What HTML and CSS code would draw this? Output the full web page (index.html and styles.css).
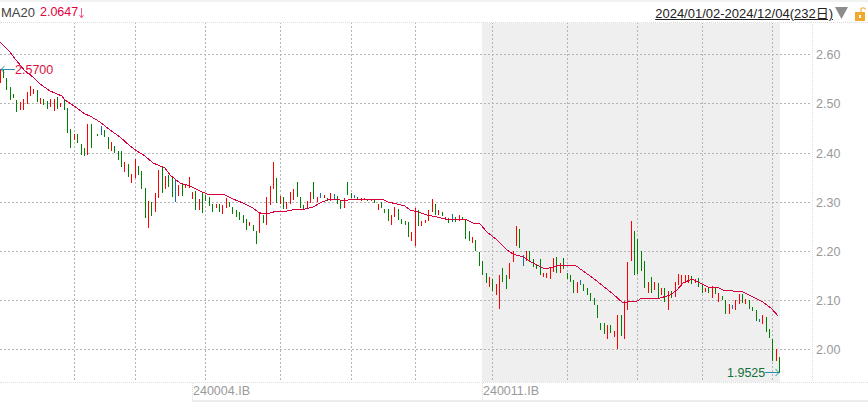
FILE: index.html
```html
<html>

<head>
	<title>MA20</title>
	<meta charset="utf-8">
	<link rel="stylesheet" href="styles.css">
</head>

<body>
	<div class="kline">
		<div class="head">
			<div class="legend">
				<span class="ma-name">MA20</span>
				<span class="ma-value">2.0647</span>
				<svg class="ma-arrow" width="5" height="11" viewBox="0 0 5 11">
					<path d="M2.500 0V10M.5 7L2.500 10L4.500 7" fill="none" stroke="#f0608c" stroke-width="1"/>
				</svg>
			</div>
			<div class="range">
				<span class="range-text">2024/01/02-2024/12/04(232日)</span>
				<svg class="range-caret" width="13" height="12" viewBox="0 0 13 12">
					<path d="M0 0H13L6.500 12Z" fill="#8c8c8c"/>
				</svg>
				<svg class="range-lock" width="11" height="14" viewBox="0 0 11 14">
					<path d="M6 5V3Q6 .8 8 .8T10.500 2.500" fill="none" stroke="#f0b040" stroke-width="1.200"/>
					<rect x="0" y="5" width="10" height="9" fill="#f0a92e"/>
					<rect x="4" y="8" width="2" height="3" fill="#fff"/>
				</svg>
			</div>
		</div>

		<svg class="plot" width="868" height="359" viewBox="0 23 868 359">
			<rect x="482" y="22" width="298" height="360" fill="#efefef"/>

			<!-- grid -->
			<path class="grid" d="M0 54.500H812M0 103.500H812M0 153.500H812M0 202.500H812M0 251.500H812M0 300.500H812M0 349.500H812"/>
			<path class="grid" d="M74.500 22V382M135.500 22V382M205.500 22V382M280.500 22V382M351.500 22V382M415.500 22V382M492.500 22V382M567.500 22V382M637.500 22V382M702.500 22V382M772.500 22V382"/>
			<path class="grid-light" d="M812.500 22V382"/>

			<!-- bars -->
			<path class="bar bar-up" d="M0.500 69V83M20.500 102V110M23.500 99V110M27.500 92V104M30.500 86V96M33.500 89V94M40.500 98V104M50.500 99V107M54.500 99V111M60.500 103V107M74.500 134V140M87.500 124V155M111.500 142V151M124.500 162V172M131.500 174V183M135.500 159V178M148.500 201V228M155.500 193V212M158.500 170V198M165.500 176V189M178.500 185V196M185.500 184V188M189.500 177V188M192.500 192V199M199.500 199V210M216.500 204V208M222.500 205V214M226.500 198V208M249.500 222V226M259.500 213V233M266.500 197V225M270.500 186V205M273.500 162V189M280.500 196V204M286.500 202V209M290.500 192V204M293.500 189V200M307.500 201V209M310.500 192V203M317.500 197V202M324.500 195V198M330.500 193V201M344.500 198V208M361.500 198V201M364.500 198V200M371.500 199V201M378.500 204V210M391.500 215V225M394.500 207V217M411.500 232V241M415.500 208V246M421.500 221V226M425.500 220V223M428.500 210V221M432.500 199V212M438.500 210V215M445.500 217V220M459.500 215V221M472.500 237V243M489.500 277V287M496.500 284V295M499.500 275V309M509.500 263V279M513.500 251V262M516.500 226V246M526.500 251V261M543.500 273V277M546.500 273V278M550.500 267V279M553.500 258V272M560.500 263V273M577.500 282V293M607.500 325V339M614.500 331V337M617.500 315V349M624.500 301V339M627.500 262V310M631.500 221V261M648.500 282V293M654.500 282V290M661.500 288V295M668.500 291V310M675.500 282V297M678.500 274V285M681.500 275V286M685.500 275V283M688.500 275V283M695.500 279V283M705.500 288V292M712.500 286V298M718.500 293V302M729.500 304V314M735.500 300V310M739.500 294V304M745.500 299V304M762.500 315V324M776.500 349V361"/>
			<path class="bar bar-down" d="M3.500 69V78M6.500 78V90M10.500 87V100M13.500 94V98M16.500 100V112M37.500 90V102M43.500 99V105M47.500 101V109M57.500 97V109M64.500 100V110M67.500 108V133M70.500 129V148M77.500 134V143M81.500 144V155M84.500 148V156M91.500 124V148M97.500 134V136M104.500 130V137M108.500 137V149M114.500 146V153M118.500 151V160M121.500 151V167M128.500 164V177M138.500 166V175M141.500 171V189M145.500 188V218M151.500 202V216M162.500 167V193M168.500 175V187M172.500 178V197M182.500 184V196M195.500 191V210M202.500 192V213M205.500 195V201M209.500 197V206M212.500 204V212M219.500 204V212M229.500 202V207M232.500 207V214M236.500 210V217M239.500 212V220M243.500 215V223M246.500 219V230M253.500 225V231M256.500 231V244M263.500 215V223M276.500 178V203M283.500 197V209M297.500 182V197M300.500 197V208M303.500 205V209M313.500 182V199M327.500 198V201M337.500 196V204M340.500 201V209M347.500 182V195M351.500 193V198M357.500 197V200M367.500 199V201M374.500 200V203M381.500 202V208M384.500 209V213M388.500 209V221M398.500 209V220M401.500 219V224M405.500 221V225M408.500 222V237M418.500 210V226M435.500 204V215M442.500 212V216M448.500 218V223M455.500 217V222M462.500 217V220M465.500 220V239M469.500 231V241M475.500 240V251M479.500 252V266M482.500 261V275M486.500 273V283M492.500 279V291M502.500 268V282M506.500 275V289M519.500 229V248M529.500 251V262M533.500 259V267M536.500 265V269M540.500 259V275M556.500 257V273M563.500 258V269M567.500 273V279M570.500 275V282M573.500 280V293M583.500 284V291M587.500 288V295M590.500 293V301M594.500 298V305M597.500 305V318M600.500 323V330M604.500 323V334M610.500 325V333M621.500 315V336M634.500 231V275M637.500 239V274M641.500 251V271M644.500 261V288M651.500 277V293M658.500 283V298M664.500 288V302M671.500 291V298M691.500 276V284M698.500 278V287M702.500 285V293M708.500 288V293M715.500 288V294M722.500 296V300M725.500 300V314M742.500 294V303M749.500 300V309M752.500 307V311M756.500 310V321M766.500 317V332M769.500 329V338M772.500 339V361M779.500 357V373"/>
			<path class="bar bar-flat" d="M101.500 126V135M175.500 180V202M320.500 193V198M334.500 194V200M354.500 195V198M452.500 214V222M523.500 255V266M580.500 280V285M732.500 305V309M759.500 319V322"/>

			<!-- MA20 -->
			<polyline class="ma-line" points="0,42 10,52 16,60 25,71 33,77 40,84 50,91 62,96 65,100 74,106 85,114 90,116 100,122 110,130 120,137 130,146 137,151 145,156 153,163 165,168 170,175 180,183 190,186 200,191 207,194 223,194 233,199 243,203 253,208 258,212 263,214 270,213 277,211 287,211 297,209 305,209 313,207 320,203 327,200 335,199 340,200 348,200 350,199 382,199 388,202 397,204 405,206 410,210 418,212 427,215 437,217 445,219 467,220 473,223 480,224 487,232 497,240 507,250 513,254 523,257 533,263 545,269 553,267 560,265 575,265 583,271 593,278 603,286 613,294 623,303 628,302 637,301 642,298 657,299 670,295 677,290 683,283 692,279 700,283 708,287 717,287 723,290 743,292 753,297 763,302 772,309 778,316"/>

			<!-- high / low marks -->
			<path class="mark" d="M15 69.500H1M4.500 66L1 69.500L4.500 73"/>
			<text class="mark-high" x="15" y="74">2.5700</text>
			<path class="mark" d="M765 372.500H779M775.500 369L779 372.500L775.500 376"/>
			<text class="mark-low" x="727" y="377">1.9525</text>

			<!-- price scale -->
			<text class="scale" x="816" y="59">2.60</text>
			<text class="scale" x="816" y="108">2.50</text>
			<text class="scale" x="816" y="158">2.40</text>
			<text class="scale" x="816" y="207">2.30</text>
			<text class="scale" x="816" y="256">2.20</text>
			<text class="scale" x="816" y="305">2.10</text>
			<text class="scale" x="816" y="354">2.00</text>
		</svg>

		<div class="codes">
			<span class="code">240004.IB</span>
			<span class="code">240011.IB</span>
		</div>
	</div>
</body>

</html>
```

FILE: styles.css
```css
body {
	margin: 0;
	background-color: #fff;
	font-family: "Liberation Sans", "Noto Sans CJK SC", sans-serif;
	font-size: 13px;
}

.kline {
	width: 868px;
	height: 403px;
	overflow: hidden;
	box-sizing: border-box;
	border-top: 2px solid #f2f2f2;
}

.head {
	display: flex;
	justify-content: space-between;
	align-items: center;
	box-sizing: border-box;
	height: 20px;
	padding-left: 1px;
}

.legend {
	display: flex;
	align-items: center;
	gap: 5px;
}

.ma-name {
	color: #444;
}

.ma-value {
	color: #e6003c;
	font-size: 12.500px;
}

.ma-arrow {
	margin-left: -4px;
	margin-top: 3px;
}

.range {
	display: flex;
	align-items: center;
	padding-right: 2px;
}

.range-text {
	color: #222;
	text-decoration: underline;
}

.range-caret {
	margin-left: 2px;
	margin-top: 1px;
}

.range-lock {
	margin-left: 7px;
	margin-top: 3px;
}

.plot {
	display: block;
	box-sizing: content-box;
	border-top: 1px dotted #ddd;
	border-bottom: 1px dotted #ddd;
}

.grid {
	fill: none;
	stroke: #b4b4b4;
	stroke-width: 1;
	stroke-dasharray: 2 2;
	shape-rendering: crispEdges;
}

.grid-light {
	fill: none;
	stroke: #ddd;
	stroke-width: 1;
	stroke-dasharray: 1 1;
	shape-rendering: crispEdges;
}

.bar {
	fill: none;
	stroke-width: 1;
	shape-rendering: crispEdges;
}

.bar-up {
	stroke: #f00;
}

.bar-down {
	stroke: #008000;
}

.bar-flat {
	stroke: #1c6f9c;
}

.ma-line {
	fill: none;
	stroke: #d8003c;
	stroke-width: 1;
	shape-rendering: crispEdges;
}

.mark {
	fill: none;
	stroke: #2a8fa8;
	stroke-width: 1;
}

.mark-high {
	fill: #d8103c;
	font-size: 12.500px;
}

.mark-low {
	fill: #14703c;
	font-size: 12.500px;
}

.scale {
	fill: #999;
	font-size: 12.500px;
}

.codes {
	display: grid;
	grid-template-columns: 290px 1fr;
	margin-left: 192px;
	height: 19px;
	box-sizing: border-box;
	border-bottom: 2px solid #ececec;
}

.code {
	color: #999;
	font-size: 12.500px;
	line-height: 17px;
	border-left: 1px dotted #ddd;
}
```
